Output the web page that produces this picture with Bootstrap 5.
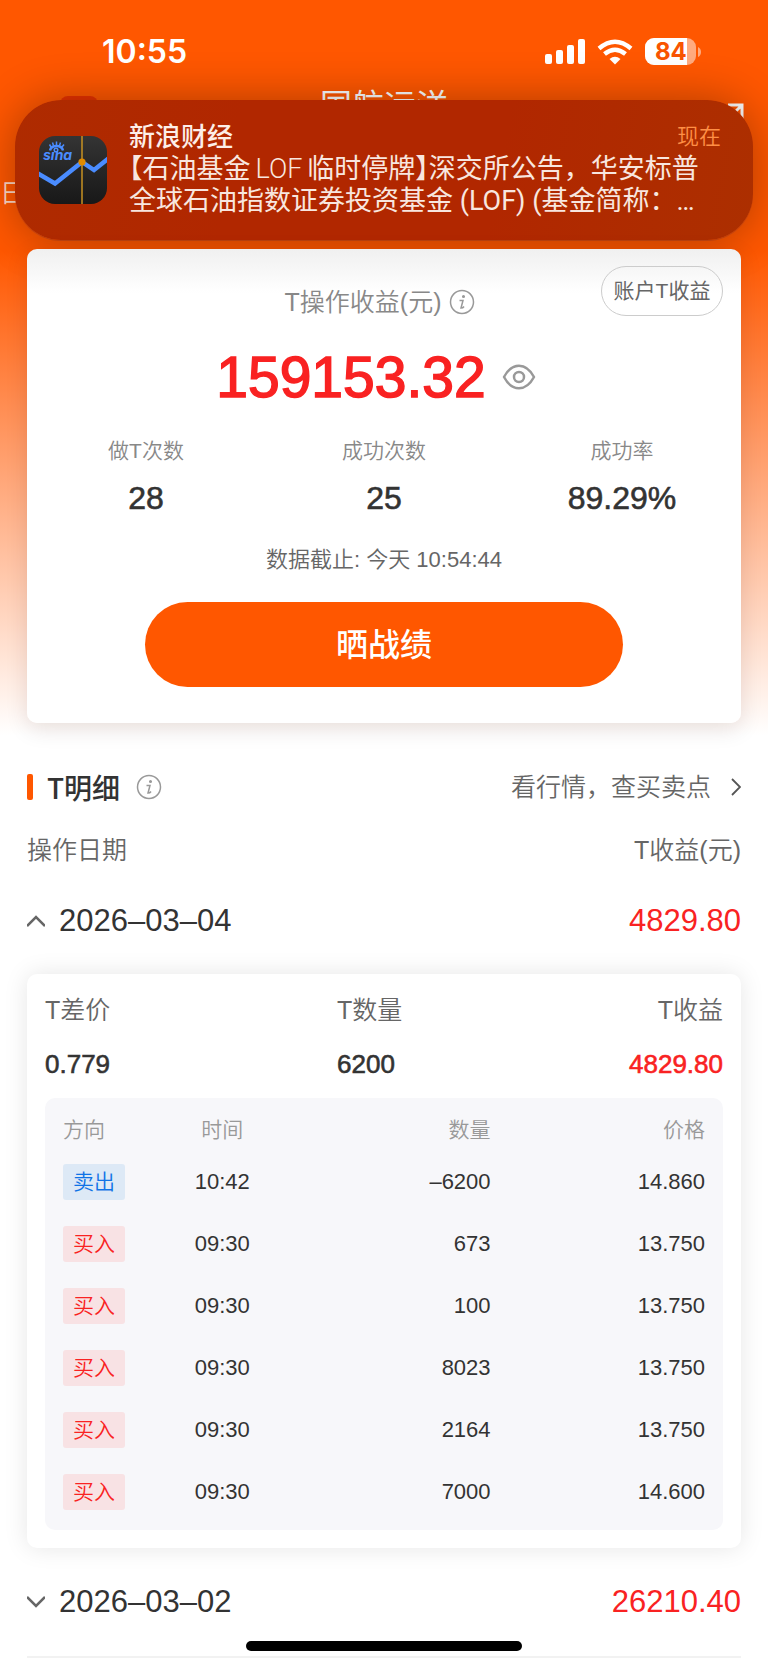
<!DOCTYPE html>
<html lang="zh-CN">
<head>
<meta charset="utf-8">
<meta name="viewport" content="width=device-width, initial-scale=1">
<title>国航远洋 - T操作收益</title>
<link rel="stylesheet" href="https://cdn.jsdelivr.net/npm/bootstrap@5.3.0/dist/css/bootstrap.min.css">
<style>
  body { font-family: "Liberation Sans", "Noto Sans CJK SC", sans-serif; color: #333; background: #fff; line-height: 34px; font-weight: 350; }
  .app { min-height: 100vh; overflow: hidden; background: linear-gradient(#ff5700 0, #ff5700 250px, #fff 735px); }
  .fs-21 { font-size: 21px; line-height: 30px; }
  .fs-22 { font-size: 22px; line-height: 30px; }
  .fs-25 { font-size: 25px; line-height: 34px; }
  .fs-26 { font-size: 26px; line-height: 34px; }
  .fs-31 { font-size: 31px; line-height: 40px; }
  .fs-32 { font-size: 32px; line-height: 40px; }
  .c-red { color: #f92222; }
  .c-6 { color: #666; }
  .c-8 { color: #888; }
  .medium-ink { -webkit-text-stroke: 0.6px currentColor; }

  .status { padding: 34px 66px 18px 102px; height: 88px; font-family: Inter, sans-serif; }
  .status .clock { font-size: 32px; line-height: 36px; font-weight: 600; }
  .navline { height: 36px; padding: 0 24px 0 60px; }
  .navline h1 { font-size: 32px; line-height: 36px; }
  .logo-dot { width: 38px; height: 28px; background: #e83200; }
  .tabline { padding: 52px 0 39px; }
  .tabline a { font-size: 25px; line-height: 34px; color: #ffd9c4; text-decoration: none; }

  .notice { top: 100px; left: 15px; right: 15px; height: 140px; padding: 21px 32px 0 24px; border-radius: 46px; z-index: 1;
    background: linear-gradient(100deg, #ae2b00 0, #b12700 30%, #b12700 65%, #ac2f00 100%);
    box-shadow: 0 0 46px rgba(0, 0, 0, .32), 0 1px 0 #d84c14; color: #f8e6df; }
  .notice-icon { margin-top: 15px; }
  .notice-body { margin-left: 6px; font-family: Roboto, "Noto Sans CJK SC", sans-serif; }
  .notice-title { font-size: 26px; line-height: 32px; font-weight: 500; color: #fdeee8; }
  .notice-time { font-size: 22px; line-height: 32px; color: #ff8f45; }
  .notice-text { font-size: 27px; line-height: 32px; font-weight: 400; }
  .half { font-feature-settings: "halt"; }
  .latin { padding: 0 5px; font-weight: 300; }

  .sheet { margin: 0 27px; border-radius: 10px; background: #fff; }
  .summary { z-index: 2; padding: 36px 0; background: linear-gradient(#f0f0f0 0, #fff 44px); box-shadow: 0 6px 22px rgba(60, 20, 0, .12); }
  .account-btn { top: 17px; right: 18px; width: 122px; height: 50px; border: 1px solid #ccc; border-radius: 25px; background: none; color: #666; }
  .total { font-size: 57px; line-height: 70px; margin-top: 23px; }
  .total .amount { -webkit-text-stroke: 1.5px currentColor; }
  .as-of { margin-top: 27px; }
  .share-btn { width: 67%; height: 85px; margin-top: 27px; border: 0; border-radius: 43px; background: #ff5700; color: #fff; font-size: 32px; font-weight: 500; }

  .page-x { margin-left: 27px; margin-right: 27px; }
  .records { margin-top: 44px; }
  .bar { width: 6px; height: 26px; border-radius: 2px; background: #ff5700; }
  .section-title { font-family: "Noto Sans CJK SC", sans-serif; font-size: 28px; line-height: 40px; font-weight: 500; color: #333; margin: 0 16px 0 14px; }
  .quote-link { gap: 20px; }
  .list-head { margin-top: 26px; }
  .day { margin-top: 34px; }
  .day-btn { border: 0; background: none; padding: 0; color: #333; gap: 14px; }
  .detail { margin-top: 33px; padding: 19px 18px 18px; box-shadow: 0 0 24px rgba(0, 0, 0, .1); }
  .figure-num { margin-top: 20px; }
  .trades { margin-top: 17px; padding: 14px 18px 7px; background: #f7f7fa; border-radius: 10px; }
  .trades table { width: 100%; table-layout: fixed; }
  .trades th { height: 39px; padding: 0 0 3px; font-weight: 350; color: #999; }
  .trades td { height: 62px; padding: 0; }
  .c1 { width: 18%; }
  .c3 { width: 35%; }
  .c4 { width: 33.4%; }
  .tag { display: inline-block; width: 62px; height: 36px; line-height: 36px; font-size: 21px; border-radius: 3px; text-align: center; vertical-align: middle; }
  .tag-buy { background: #f8e2e4; color: #f92222; }
  .tag-sell { background: #dde9f6; color: #1073e6; }
  .last-day { padding-bottom: 34px; border-bottom: 2px solid #f2f2f2; }
  .home-bar { bottom: 14px; left: 50%; width: 276px; height: 10px; margin-left: -138px; border-radius: 5px; background: #000; }
</style>
</head>
<body>
<div class="app position-relative">

  <header>
    <div class="status d-flex justify-content-between align-items-center text-white">
      <span class="clock">10:55</span>
      <div class="d-flex align-items-center">
        <svg width="40" height="26" viewBox="0 0 40 26" fill="#fff" aria-label="信号"><rect x="0" y="15" width="7" height="10" rx="2"/><rect x="11" y="11" width="7" height="14" rx="2"/><rect x="22" y="6" width="7" height="19" rx="2"/><rect x="33" y="0" width="7" height="25" rx="2"/></svg>
        <svg class="ms-2 me-2" width="44" height="28" viewBox="-4 0 44 28" fill="none" stroke="#fff" aria-label="Wi-Fi"><path d="M2 10.500Q18-3 34 10.500" stroke-width="4.500"/><path d="M7.500 16Q18 7.500 28.500 16" stroke-width="4.500"/><path d="M18 26.500l-5.500-5.500Q18 16.500 23.500 21Z" fill="#fff" stroke="none"/></svg>
        <svg width="57" height="28" viewBox="0 0 57 28" aria-label="电池"><defs><clipPath id="batt"><rect x="0" y="0" width="51" height="27" rx="9"/></clipPath></defs><g clip-path="url(#batt)"><rect width="51" height="27" fill="#ffab7f"/><rect width="42" height="27" fill="#fff"/></g><path d="M53 9q3 1.500 3 5t-3 5z" fill="#ffab7f"/><text x="10" y="22" font-family="Inter, sans-serif" font-size="24" font-weight="700" fill="#f95400">84</text></svg>
      </div>
    </div>
    <div class="navline d-flex justify-content-between align-items-center text-white position-relative">
      <span class="logo-dot rounded-3 mt-2"></span>
      <h1 class="m-0 fw-normal position-absolute start-50 translate-middle-x">国航远洋</h1>
      <svg class="mt-4" width="92" height="30" viewBox="0 0 92 30" fill="none" stroke="#fff" stroke-width="3" aria-label="搜索与分享"><circle cx="8" cy="11" r="10"/><path d="M51 7V2h13M76 2h14v14M90 2L74 18M51 7v21h35V20"/></svg>
    </div>
    <nav class="tabline d-flex"><a href="#">日</a></nav>
  </header>

  <aside class="notice position-absolute d-flex gap-3">
    <svg class="notice-icon flex-shrink-0" width="68" height="68" viewBox="0 0 68 68" aria-label="新浪财经">
      <defs><linearGradient id="ink" x2="0" y2="1"><stop stop-color="#343434"/><stop offset="1" stop-color="#181818"/></linearGradient><clipPath id="app"><rect width="68" height="68" rx="16"/></clipPath></defs>
      <g clip-path="url(#app)"><rect width="68" height="68" fill="url(#ink)"/>
        <path d="M-2 37l18 10.500L43 26l12 8 15-12" fill="none" stroke="#4a8cff" stroke-width="4.500"/>
        <path d="M43 0v68" stroke="#c79222" stroke-width="1.500"/><circle cx="43" cy="26" r="3.600" fill="#e08a00"/>
        <g fill="none" stroke="#4a8cff"><path d="M11 14.500Q12 10 17.500 10T24 14.500" stroke-width="2.500"/><circle cx="17" cy="14" r="1.800" stroke-width="1.500"/><path d="M12 11l-1.500-2.500M14.500 9.500l-1-3M17.500 9V5.500M20.500 9.500l1-3M23 11l2-2.500" stroke-width="1.500"/></g>
        <text x="4" y="24" font-family="Inter, sans-serif" font-size="14" font-style="italic" font-weight="700" fill="#4a8cff">sına</text>
      </g>
    </svg>
    <div class="notice-body flex-grow-1">
      <div class="d-flex justify-content-between"><span class="notice-title">新浪财经</span><span class="notice-time">现在</span></div>
      <div class="notice-text text-nowrap"><span class="half">【</span>石油基金<span class="latin">LOF</span>临时停牌<span class="half">】</span>深交所公告，华安标普<br>全球石油指数证券投资基金 (LOF) (基金简称：…</div>
    </div>
  </aside>

  <main>
    <section class="sheet summary position-relative text-center">
      <button type="button" class="account-btn position-absolute p-0 fs-21">账户T收益</button>
      <div class="d-flex justify-content-center align-items-center gap-2 me-2 fs-25 c-8">
        <span>T操作收益(元)</span>
        <svg width="26" height="26" viewBox="0 0 26 26" fill="none" stroke="#999" stroke-width="1.500" aria-label="说明"><circle cx="13" cy="13" r="11.500"/><path d="M10.500 11.500h3.500l-2 7.500q2 0 3-1.500"/><circle cx="14.500" cy="7.500" r=".8" fill="#999"/></svg>
      </div>
      <div class="total d-flex justify-content-center align-items-center gap-3 me-3 c-red">
        <span class="amount">159153.32</span>
        <svg width="34" height="26" viewBox="0 0 34 26" fill="none" stroke="#999" stroke-width="2.500" aria-label="显示金额"><path d="M2 13C10-2 24-2 32 13C24 28 10 28 2 13Z" stroke-linejoin="round"/><circle cx="17" cy="13" r="5"/></svg>
      </div>
      <div class="row g-0 mt-4">
        <div class="col"><div class="fs-21 c-8">做T次数</div><div class="fs-32 medium-ink mt-2 pt-1">28</div></div>
        <div class="col"><div class="fs-21 c-8">成功次数</div><div class="fs-32 medium-ink mt-2 pt-1">25</div></div>
        <div class="col"><div class="fs-21 c-8">成功率</div><div class="fs-32 medium-ink mt-2 pt-1">89.29%</div></div>
      </div>
      <div class="as-of fs-22 c-6">数据截止: 今天 10:54:44</div>
      <button type="button" class="share-btn">晒战绩</button>
    </section>

    <section class="records">
      <div class="page-x d-flex align-items-center">
        <span class="bar"></span>
        <h2 class="section-title">T明细</h2>
        <svg width="26" height="26" viewBox="0 0 26 26" fill="none" stroke="#999" stroke-width="1.500" aria-label="说明"><circle cx="13" cy="13" r="11.500"/><path d="M10.500 11.500h3.500l-2 7.500q2 0 3-1.500"/><circle cx="14.500" cy="7.500" r=".8" fill="#999"/></svg>
        <a href="#" class="quote-link ms-auto fs-25 c-6 text-decoration-none d-flex align-items-center">看行情，查买卖点
          <svg width="10" height="18" viewBox="0 0 10 18" fill="none" stroke="#555" stroke-width="1.800"><path d="M1 1l8 8-8 8"/></svg></a>
      </div>
      <div class="page-x list-head d-flex justify-content-between fs-25 c-6"><span>操作日期</span><span>T收益(元)</span></div>

      <div class="page-x day d-flex justify-content-between fs-31">
        <button type="button" class="day-btn d-flex align-items-center" aria-expanded="true">
          <svg width="18" height="12" viewBox="0 0 18 12" fill="none" stroke="#666" stroke-width="2.500"><path d="M0 11l9-9 9 9"/></svg>2026–03–04</button>
        <span class="c-red">4829.80</span>
      </div>

      <div class="sheet detail">
        <div class="d-flex justify-content-between">
          <div><div class="fs-25 c-6">T差价</div><div class="figure-num medium-ink fs-26">0.779</div></div>
          <div><div class="fs-25 c-6">T数量</div><div class="figure-num medium-ink fs-26">6200</div></div>
          <div class="text-end"><div class="fs-25 c-6">T收益</div><div class="figure-num medium-ink fs-26 c-red">4829.80</div></div>
        </div>
        <div class="trades">
          <table class="fs-22">
            <colgroup><col class="c1"><col><col class="c3"><col class="c4"></colgroup>
            <thead><tr class="fs-21"><th>方向</th><th class="text-center">时间</th><th class="text-end">数量</th><th class="text-end">价格</th></tr></thead>
            <tbody>
              <tr><td><span class="tag tag-sell">卖出</span></td><td class="text-center">10:42</td><td class="text-end">–6200</td><td class="text-end">14.860</td></tr>
              <tr><td><span class="tag tag-buy">买入</span></td><td class="text-center">09:30</td><td class="text-end">673</td><td class="text-end">13.750</td></tr>
              <tr><td><span class="tag tag-buy">买入</span></td><td class="text-center">09:30</td><td class="text-end">100</td><td class="text-end">13.750</td></tr>
              <tr><td><span class="tag tag-buy">买入</span></td><td class="text-center">09:30</td><td class="text-end">8023</td><td class="text-end">13.750</td></tr>
              <tr><td><span class="tag tag-buy">买入</span></td><td class="text-center">09:30</td><td class="text-end">2164</td><td class="text-end">13.750</td></tr>
              <tr><td><span class="tag tag-buy">买入</span></td><td class="text-center">09:30</td><td class="text-end">7000</td><td class="text-end">14.600</td></tr>
            </tbody>
          </table>
        </div>
      </div>

      <div class="page-x day last-day d-flex justify-content-between fs-31">
        <button type="button" class="day-btn d-flex align-items-center" aria-expanded="false">
          <svg width="18" height="12" viewBox="0 0 18 12" fill="none" stroke="#666" stroke-width="2.500"><path d="M0 1l9 9 9-9"/></svg>2026–03–02</button>
        <span class="c-red">26210.40</span>
      </div>
    </section>
  </main>

  <div class="home-bar position-absolute"></div>
</div>
<script src="https://cdn.jsdelivr.net/npm/bootstrap@5.3.0/dist/js/bootstrap.bundle.min.js"></script>
</body>
</html>
